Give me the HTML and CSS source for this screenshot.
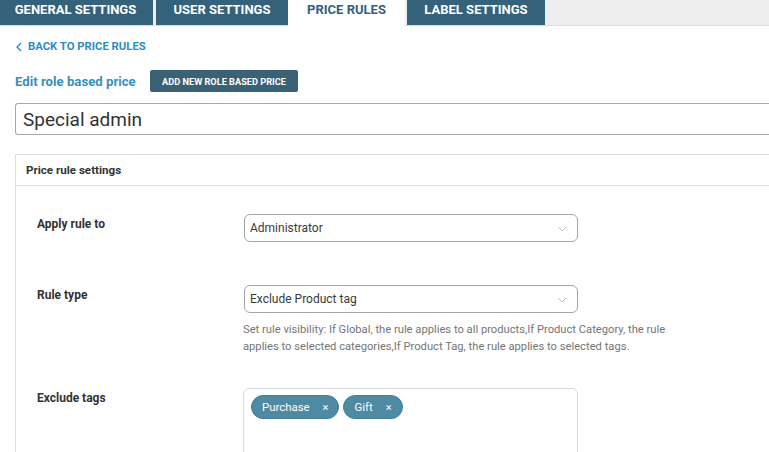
FILE: index.html
```html
<!DOCTYPE html>
<html>
<head>
<meta charset="utf-8">
<link rel="stylesheet" href="styles.css">
</head>
<body>
<nav class="tabs">
  <a class="tab t1">GENERAL SETTINGS</a>
  <a class="tab t2">USER SETTINGS</a>
  <a class="tab t3 active">PRICE RULES</a>
  <a class="tab t4">LABEL SETTINGS</a>
</nav>
<main class="page">
  <a class="back"><svg width="8" height="10" viewBox="0 0 8 10"><path d="M6 1 L2 5 L6 9" fill="none" stroke="#2e8cc0" stroke-width="1.4"/></svg>BACK TO PRICE RULES</a>
  <div class="head-row">
    <h2 class="title">Edit role based price</h2>
    <button class="add-btn">ADD NEW ROLE BASED PRICE</button>
  </div>
  <div class="name-input">Special admin</div>
  <section class="card">
    <div class="card-head">Price rule settings</div>
    <div class="card-body">
      <div class="row r1">
        <div class="label">Apply rule to</div>
        <div class="field">
          <div class="select">Administrator<svg class="chev" width="10" height="6" viewBox="0 0 10 6"><path d="M1 1 L5 5 L9 1" fill="none" stroke="#c4c4c4" stroke-width="1"/></svg></div>
        </div>
      </div>
      <div class="row r2">
        <div class="label">Rule type</div>
        <div class="field">
          <div class="select">Exclude Product tag<svg class="chev" width="10" height="6" viewBox="0 0 10 6"><path d="M1 1 L5 5 L9 1" fill="none" stroke="#c4c4c4" stroke-width="1"/></svg></div>
          <p class="help">Set rule visibility: If Global, the rule applies to all products,If Product Category, the rule applies to selected categories,If Product Tag, the rule applies to selected tags.</p>
        </div>
      </div>
      <div class="row r3">
        <div class="label">Exclude tags</div>
        <div class="field">
          <div class="tagbox">
            <span class="tag">Purchase<span class="x">×</span></span>
            <span class="tag">Gift<span class="x">×</span></span>
          </div>
        </div>
      </div>
    </div>
  </section>
</main>
</body>
</html>
```
FILE: styles.css
```css
* { box-sizing: border-box; }
html, body { margin: 0; padding: 0; background: #fff; overflow: hidden; }
body { font-family: Roboto, "Liberation Sans", sans-serif; color: #333; width: 769px; height: 452px; }

.tabs {
  display: flex;
  height: 26px;
  background: #eeeeee;
  border-bottom: 1px solid #dcdcdc;
}
.tab {
  display: flex;
  align-items: center;
  justify-content: center;
  height: 25px;
  background: #33627a;
  color: #fff;
  font-size: 13px;
  font-weight: 700;
  padding-bottom: 7px;
}
.t1 { width: 153px; margin-right: 3px; padding-right: 2px; }
.t2 { width: 132px; }
.t3 { width: 117px; background: #fff; color: #33627a; height: 26px; }
.t4 { width: 138px; margin-left: 2px; }

.page { padding: 0 0 0 15px; }

.back {
  display: flex;
  align-items: center;
  gap: 5px;
  margin-top: 14px;
  height: 13px;
  color: #2e8cc0;
  font-size: 11.3px;
  font-weight: 700;
}

.head-row {
  display: flex;
  align-items: center;
  margin-top: 17px;
  height: 22px;
}
.title {
  margin: 0;
  font-size: 13.2px;
  font-weight: 700;
  color: #3a90ba;
  width: 135px;
}
.add-btn {
  border: 0;
  background: #3b6274;
  color: #fff;
  font-family: Roboto, "Liberation Sans", sans-serif;
  font-size: 9.2px;
  font-weight: 700;
  height: 22px;
  width: 148px;
  border-radius: 2px;
  padding: 0;
}

.name-input {
  margin-top: 11px;
  height: 32px;
  border: 1px solid #a8a8a8;
  border-right: 0;
  border-radius: 3px 0 0 3px;
  font-size: 19px;
  padding-left: 7px;
  display: flex;
  align-items: center;
  color: #333;
}

.card {
  margin-top: 19px;
  border: 1px solid #dedede;
  border-right: 0;
  border-bottom: 0;
  height: 320px;
}
.card-head {
  height: 31px;
  border-bottom: 1px solid #dedede;
  padding-left: 10px;
  display: flex;
  align-items: center;
  font-size: 11.6px;
  font-weight: 700;
  color: #333;
}
.card-body { padding: 28px 0 0 21px; }

.row { display: grid; grid-template-columns: 207px 334px; }
.r1 { margin-bottom: 43px; }
.r2 { margin-bottom: 33px; }
.label { font-size: 12px; font-weight: 700; color: #333; padding-top: 2px; line-height: 16px; }

.select {
  position: relative;
  height: 28px;
  border: 1px solid #a5a5a5;
  border-radius: 6px;
  font-size: 12px;
  display: flex;
  align-items: center;
  padding-left: 5px;
  color: #3a3a3a;
}
.chev { position: absolute; right: 10px; top: 11px; }

.help {
  margin: 8px 0 0 -1px;
  width: 440px;
  font-size: 11.2px;
  line-height: 17px;
  color: #757575;
}

.tagbox {
  margin-left: -1px;
  height: 80px;
  border: 1px solid #dadada;
  border-radius: 6px;
  padding: 6px 7px;
  display: flex;
  align-items: flex-start;
  gap: 4px;
}
.tag {
  display: inline-flex;
  align-items: center;
  height: 24px;
  background: #4f8aa3;
  color: #fff;
  font-size: 11.4px;
  border-radius: 12px;
  padding: 0 10px;
  border: 1px solid #467f97;
}
.x { margin-left: 13px; font-size: 11px; }
```
